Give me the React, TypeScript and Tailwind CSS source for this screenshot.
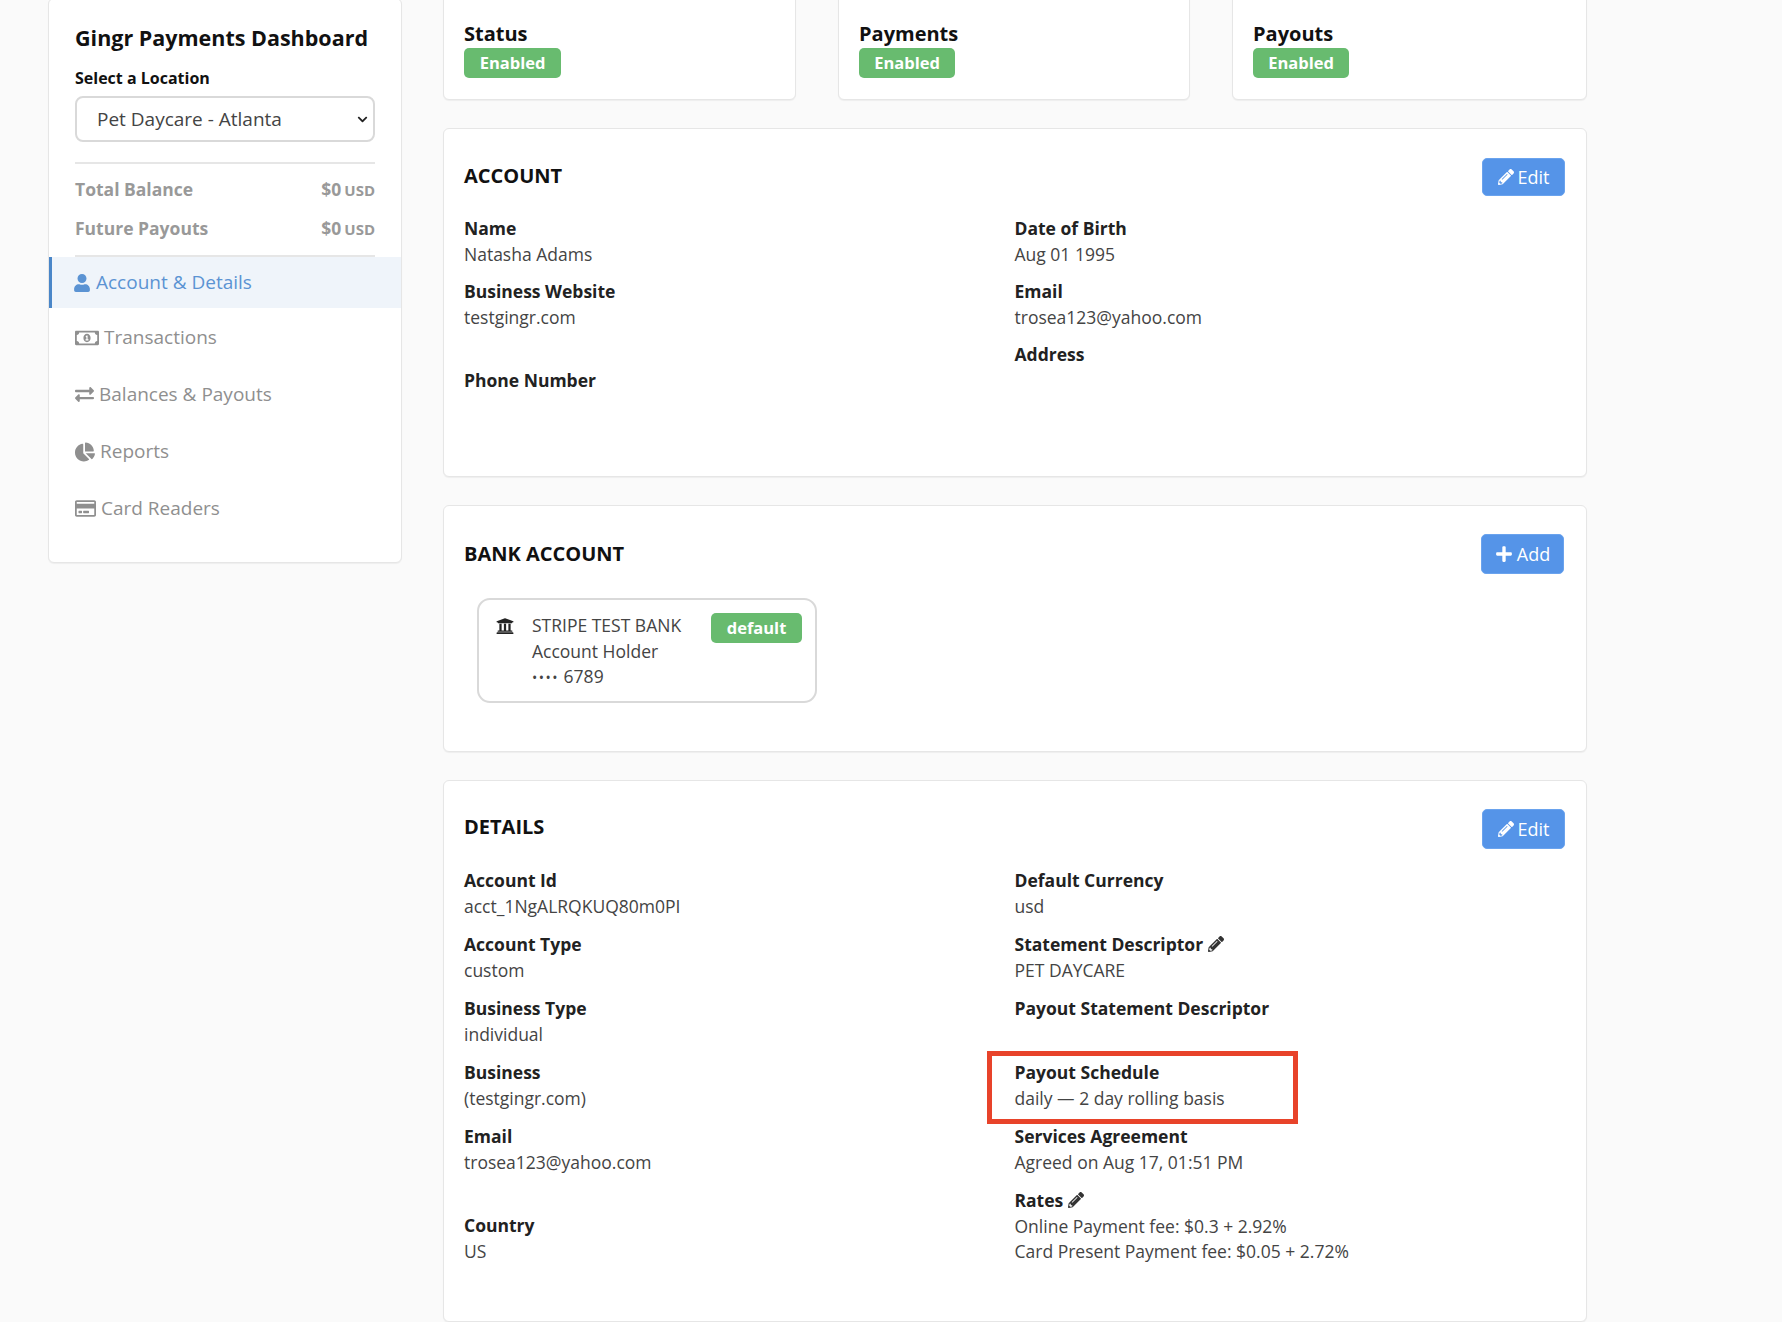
import React from "react";
import { FaUser, FaRegMoneyBillAlt, FaExchangeAlt, FaChartPie, FaRegCreditCard, FaPencilAlt, FaPlus, FaUniversity, FaChevronDown } from "react-icons/fa";

function Badge({ children, className }: { children: React.ReactNode; className: string }) {
  return (
    <span className={"flex h-[30px] items-center justify-center rounded-[5px] bg-[#68bb6f] text-[16.5px] font-bold text-white " + className}>
      {children}
    </span>
  );
}

function StatusCard({ title, badgeW }: { title: string; badgeW: string }) {
  return (
    <div className="flex h-[103px] flex-col rounded-b-[6px] border border-[#e6e6e6] bg-white pl-[20px] pt-[23px] shadow-[0_1px_1px_rgba(0,0,0,0.05)]">
      <div className="mb-[2px] text-[20px] font-bold leading-[25px] text-[#111]">{title}</div>
      <Badge className={badgeW}>Enabled</Badge>
    </div>
  );
}

function Field({ label, value, icon, extra, box, gap = "mb-[12px]" }: { label: string; value?: string; icon?: boolean; extra?: boolean; box?: boolean; gap?: string }) {
  return (
    <div className={"relative " + gap}>
      {box && <div className="absolute left-[-28px] top-[-8px] h-[73px] w-[311px] border-[5px] border-[#e8432a]" />}
      <div className="flex h-[25.5px] items-center gap-[5px] text-[17.5px] font-bold text-[#222]">
        {label}
        {icon && <FaPencilAlt className="h-[16px] w-[16px] text-[#333]" />}
      </div>
      {value !== undefined && <div className="h-[25.5px] text-[17.5px] leading-[26px] text-[#444]">{value}</div>}
      {extra && <div className="h-[25.5px]" />}
    </div>
  );
}

function BlueButton({ children, h, className = "" }: { children: React.ReactNode; h: string; className?: string }) {
  return (
    <button className={"flex w-[83px] items-center justify-center gap-[4px] rounded-[5px] border border-[#6aa3ee] bg-[#5594e8] text-[18px] text-white " + h + " " + className}>
      {children}
    </button>
  );
}

function Card({ className, children }: { className: string; children: React.ReactNode }) {
  return <div className={"rounded-[6px] border border-[#e6e6e6] bg-white pl-[20px] pr-[21px] shadow-[0_1px_1px_rgba(0,0,0,0.05)] " + className}>{children}</div>;
}

function Header({ title, titleClass = "", children }: { title: string; titleClass?: string; children: React.ReactNode }) {
  return (
    <div className="flex items-center justify-between">
      <h2 className={"text-[20px] font-bold text-[#111] " + titleClass}>{title}</h2>
      {children}
    </div>
  );
}

function NavItem({ icon, label, gap }: { icon: React.ReactNode; label: string; gap: string }) {
  return (
    <div className={"flex h-[57px] items-center pl-[26px] text-[19px] text-[#8f8f8f] " + gap}>
      {icon}
      {label}
    </div>
  );
}

export default function App() {
  return (
    <div className="flex h-[1322px] items-start overflow-hidden bg-[#fafafa] pl-[48px] font-['Open_Sans',sans-serif]">
      <aside className="mt-[-2px] h-[565px] w-[354px] shrink-0 rounded-[6px] border border-[#e6e6e6] bg-white shadow-[0_1px_1px_rgba(0,0,0,0.05)]">
        <div className="px-[26px] pt-[25px]">
          <h1 className="text-[21.5px] font-bold leading-[28px] text-[#111]">Gingr Payments Dashboard</h1>
          <div className="mt-[16px] text-[16px] font-bold leading-[20px] text-[#111]">Select a Location</div>
          <div className="relative mt-[8px] w-[300px]">
            <select className="h-[46px] w-full appearance-none rounded-[8px] border-2 border-[#d9d9d9] bg-white pl-[20px] text-[19px] text-[#444]">
              <option>Pet Daycare - Atlanta</option>
            </select>
            <FaChevronDown className="pointer-events-none absolute right-[6px] top-[18px] h-[11px] w-[13px] text-[#222]" />
          </div>
          <div className="mt-[20px] border-t-2 border-[#e6e6e6]" />
          <div className="mt-[13.5px] flex h-[24px] items-center justify-between text-[17.5px] font-bold text-[#999]">
            <span>Total Balance</span>
            <span>$0<span className="ml-[3px] text-[15px] font-bold">USD</span></span>
          </div>
          <div className="mt-[14.5px] flex h-[24px] items-center justify-between text-[17.5px] font-bold text-[#999]">
            <span>Future Payouts</span>
            <span>$0<span className="ml-[3px] text-[15px] font-bold">USD</span></span>
          </div>
          <div className="mt-[15px] border-t-2 border-[#e6e6e6]" />
        </div>
        <div className="mb-[1px] flex h-[51px] items-center gap-[5px] border-l-[3px] border-[#4a86c8] bg-[#eff4fa] pl-[21px] text-[19px] text-[#5b93d3]">
          <FaUser className="h-[18px] w-[18px]" />
          Account &amp; Details
        </div>
        <NavItem icon={<FaRegMoneyBillAlt className="h-[24px] w-[24px]" />} label="Transactions" gap="gap-[5px]" />
        <NavItem icon={<FaExchangeAlt className="h-[19px] w-[19px]" />} label="Balances & Payouts" gap="gap-[5px]" />
        <NavItem icon={<FaChartPie className="h-[20px] w-[20px]" />} label="Reports" gap="gap-[5px]" />
        <NavItem icon={<FaRegCreditCard className="h-[21px] w-[21px]" />} label="Card Readers" gap="gap-[5px]" />
      </aside>

      <main className="ml-[41px] mt-[-3px] flex w-[1144px] shrink-0 flex-col gap-[28px]">
        <div className="grid grid-cols-[353px_352px_1fr] gap-[42px]">
          <StatusCard title="Status" badgeW="w-[97px]" />
          <StatusCard title="Payments" badgeW="w-[96px]" />
          <StatusCard title="Payouts" badgeW="w-[96px]" />
        </div>

        <Card className="h-[349px] pt-[29px]">
          <Header title="ACCOUNT" titleClass="pb-[2px]">
            <BlueButton h="h-[38px]"><FaPencilAlt className="h-[16px] w-[16px]" />Edit</BlueButton>
          </Header>
          <div className="mt-[19.5px] grid grid-cols-2">
            <div>
              <Field label="Name" value="Natasha Adams" />
              <Field label="Business Website" value="testgingr.com" extra />
              <Field label="Phone Number" />
            </div>
            <div>
              <Field label="Date of Birth" value="Aug 01 1995" />
              <Field label="Email" value="trosea123@yahoo.com" />
              <Field label="Address" />
            </div>
          </div>
        </Card>

        <Card className="h-[247px] pt-[28px]">
          <Header title="BANK ACCOUNT">
            <BlueButton h="h-[40px]" className="mr-[1px]"><FaPlus className="h-[18px] w-[18px]" />Add</BlueButton>
          </Header>
          <div className="ml-[13px] mt-[24px] flex h-[105px] w-[340px] rounded-[13px] border-2 border-[#d9d9d9] pl-[17px] pr-[13px] pt-[13px] text-[17.5px] leading-[25.5px] text-[#444]">
            <FaUniversity className="mt-[4px] h-[18px] w-[18px] text-[#222]" />
            <div className="ml-[18px] flex-1">
              <div>STRIPE TEST BANK</div>
              <div>Account Holder</div>
              <div><span className="text-[14px] tracking-[1.5px]">••••</span> 6789</div>
            </div>
            <Badge className="w-[91px]">default</Badge>
          </div>
        </Card>

        <Card className="h-[542px] pt-[28px]">
          <Header title="DETAILS" titleClass="pb-[4px]">
            <BlueButton h="h-[40px]"><FaPencilAlt className="h-[16px] w-[16px]" />Edit</BlueButton>
          </Header>
          <div className="mt-[18px] grid grid-cols-2">
            <div>
              <Field gap="mb-[13px]" label="Account Id" value="acct_1NgALRQKUQ80m0PI" />
              <Field gap="mb-[13px]" label="Account Type" value="custom" />
              <Field gap="mb-[13px]" label="Business Type" value="individual" />
              <Field gap="mb-[13px]" label="Business" value="(testgingr.com)" />
              <Field gap="mb-[13px]" label="Email" value="trosea123@yahoo.com" extra />
              <Field gap="mb-[13px]" label="Country" value="US" />
            </div>
            <div>
              <Field gap="mb-[13px]" label="Default Currency" value="usd" />
              <Field gap="mb-[13px]" label="Statement Descriptor" value="PET DAYCARE" icon />
              <Field gap="mb-[13px]" label="Payout Statement Descriptor" value="" />
              <Field gap="mb-[13px]" label="Payout Schedule" value="daily — 2 day rolling basis" box />
              <Field gap="mb-[13px]" label="Services Agreement" value="Agreed on Aug 17, 01:51 PM" />
              <Field gap="mb-[13px]" label="Rates" value="Online Payment fee: $0.3 + 2.92%" icon />
              <div className="mt-[-13px] h-[25.5px] text-[17.5px] leading-[26px] text-[#444]">Card Present Payment fee: $0.05 + 2.72%</div>
            </div>
          </div>
        </Card>
      </main>
    </div>
  );
}
